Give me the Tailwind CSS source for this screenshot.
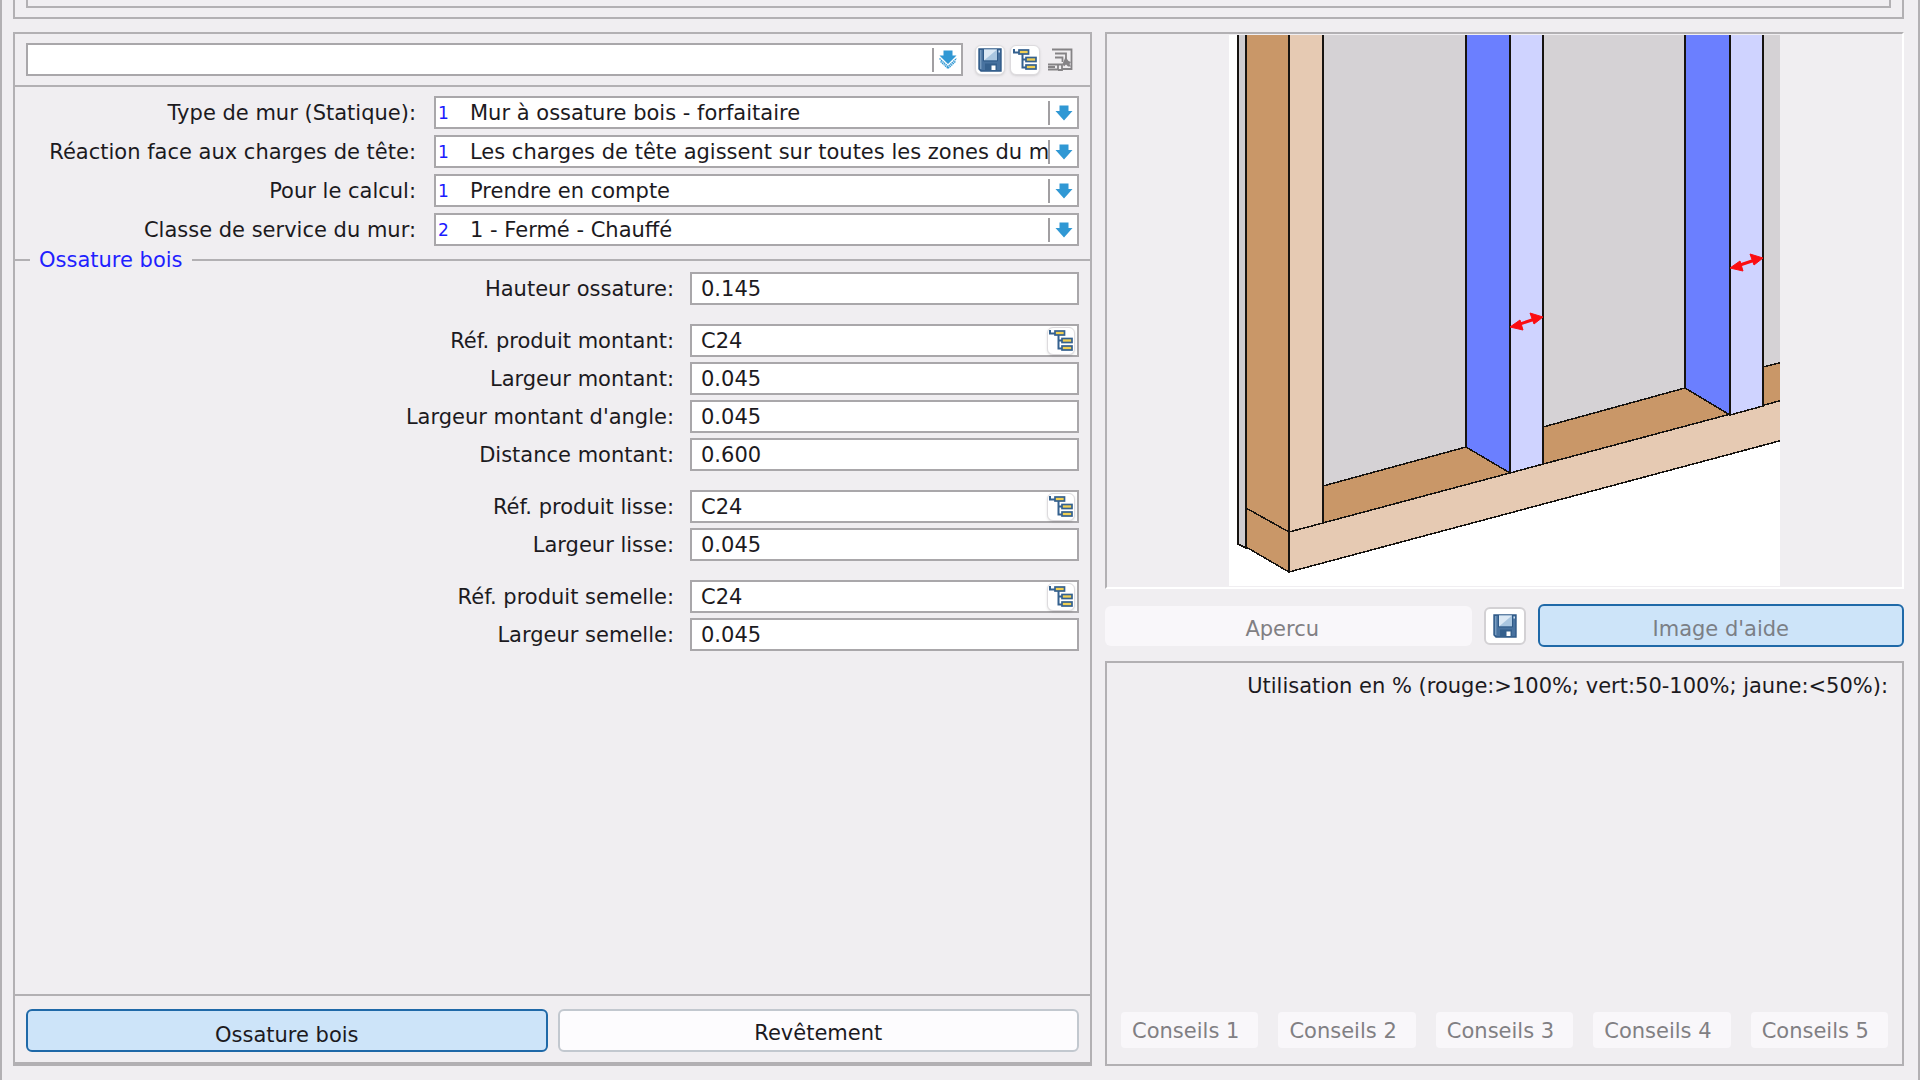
<!DOCTYPE html>
<html lang="fr">
<head>
    <meta charset="UTF-8">
    <meta name="viewport" content="width=device-width, initial-scale=1.0">
    <title>Mur à ossature bois</title>
    <script src="https://cdn.jsdelivr.net/npm/@tailwindcss/browser@4"></script>
    <style>
        body {
            font-family: 'DejaVu Sans', Verdana, sans-serif;
        }
    </style>
</head>
<body class="bg-[#f0eef1] text-[21px] leading-6 text-[#1c1a1e]">

    <!-- Shared icons -->
    <svg class="hidden">
        <symbol id="icon-arrow" viewBox="0 0 18 16">
            <path d="M4.500 0.500h9v5.500h4l-8.500 9.500L0.500 6h4z" fill="#3098d4"/>
        </symbol>
        <symbol id="icon-arrow-multi" viewBox="0 0 18 20">
            <path d="M4.500 0.500h9v5h4l-8.500 8.500L0.500 5.500h4z" fill="#3098d4"/>
            <path d="M0.500 8.500l8.500 8 8.500-8M1.500 11.500l7.500 7 7.500-7" fill="none" stroke="#3098d4" stroke-width="1.300" stroke-dasharray="1.500 0.600"/>
        </symbol>
        <symbol id="icon-save" viewBox="0 0 24 24">
            <path d="M1 1h22v22H3l-2-2z" fill="#48729f" stroke="#2f5a88" stroke-width="1.400"/>
            <path d="M2.800 2v19" stroke="#8fb0d0" stroke-width="1"/>
            <rect x="6" y="1.500" width="13" height="11" fill="#a9c6e0"/>
            <path d="M6 12.500V1.500h13z" fill="#dce9f5"/>
            <path d="M5.500 1v12h14V1" fill="none" stroke="#2f5a88" stroke-width="1"/>
            <rect x="7" y="15.500" width="12" height="7.500" fill="#35608d"/>
            <rect x="13.500" y="17.500" width="4" height="4.500" fill="#fff"/>
            <rect x="20.500" y="2.500" width="1.500" height="2" fill="#cfe0f0"/>
        </symbol>
        <symbol id="icon-tree" viewBox="0 0 24 24">
            <path d="M1 1v3.500h5M9.500 6v13.500h4M9.500 11.500h4" fill="none" stroke="#34618f" stroke-width="2"/>
            <g fill="#f2cf52" stroke="#34618f" stroke-width="1.700">
                <rect x="6" y="2" width="9.500" height="4"/>
                <rect x="13" y="9.500" width="10" height="4"/>
                <rect x="13" y="17" width="10" height="4"/>
            </g>
        </symbol>
        <symbol id="icon-transfer" viewBox="0 0 26 24">
            <g fill="none" stroke="#858386" stroke-width="1.800">
                <path d="M5 1.500h19.500v19.500H15M8 5.500h11v6M8 9.500h7.500v4.500"/>
                <path d="M1 16.500h10v5H1M1 19h7M11 16.500h4v5.500h-4"/>
            </g>
            <path d="M18.500 9l3 4 2.500 1-1.500 2 1.500 2.500h-3l-2-2-2 2-1.500-2.500z" fill="#858386"/>
        </symbol>
    </svg>

    <div class="flex min-h-screen flex-col border-x-2 border-[#b2b0b3] pr-[14px] pb-[14px] pl-[11px]">

        <!-- Bottom edge of the upper frame -->
        <div class="border-x-2 border-b-2 border-[#b2b0b3] px-[11px] pb-[9px]">
            <div class="h-2 border-x-2 border-b-2 border-[#b2b0b3]"></div>
        </div>

        <main class="mt-[13px] grid flex-1 grid-cols-[1079fr_799fr] gap-[13px]">

            <!-- Parameters -->
            <form class="flex min-w-0 flex-col border-2 border-b-4 border-[#b2b0b3]">
                <div class="flex items-center border-b-2 border-[#b2b0b3] px-[11px] pt-[9px] pb-[9px]">
                    <div class="flex h-[33px] flex-1 items-center border-2 border-[#a9a7aa] bg-white pr-1">
                        <select aria-label="Modèle" class="h-full min-w-0 flex-1 appearance-none bg-transparent px-2 outline-none"><option></option></select>
                        <span class="mr-[5px] h-6 w-[2px] bg-[#a19fa2]"></span>
                        <svg class="h-5 w-[18px]"><use href="#icon-arrow-multi"/></svg>
                    </div>
                    <div class="mr-1 ml-3 flex items-center gap-[5px]">
                        <button type="button" aria-label="Enregistrer" class="flex size-[30px] items-center justify-center rounded-md border border-[#dddbde] bg-white shadow-sm"><svg class="size-6"><use href="#icon-save"/></svg></button>
                        <button type="button" aria-label="Arborescence" class="flex size-[30px] items-center justify-center rounded-md border border-[#dddbde] bg-white shadow-sm"><svg class="size-6"><use href="#icon-tree"/></svg></button>
                        <button type="button" aria-label="Reprendre" class="flex size-[30px] items-center justify-center"><svg class="h-6 w-[26px]"><use href="#icon-transfer"/></svg></button>
                    </div>
                </div>

                <div class="flex flex-col gap-[6px] px-[11px] pt-[9px]">
                    <div class="flex items-center">
                        <label for="type" class="w-[390px] shrink-0 text-right">Type de mur (Statique):</label>
                        <div class="ml-[18px] flex h-[33px] min-w-0 flex-1 items-center border-2 border-[#a9a7aa] bg-white pr-1">
                            <span class="w-[34px] shrink-0 pl-[2px] text-[17px] text-[#1a1aff]">1</span>
                            <select id="type" class="h-full min-w-0 flex-1 appearance-none bg-transparent outline-none"><option>Mur à ossature bois - forfaitaire</option></select>
                            <span class="mr-[5px] h-6 w-[2px] shrink-0 bg-[#a19fa2]"></span>
                            <svg class="h-4 w-[18px] shrink-0"><use href="#icon-arrow"/></svg>
                        </div>
                    </div>
                    <div class="flex items-center">
                        <label for="reaction" class="w-[390px] shrink-0 text-right">Réaction face aux charges de tête:</label>
                        <div class="ml-[18px] flex h-[33px] min-w-0 flex-1 items-center border-2 border-[#a9a7aa] bg-white pr-1">
                            <span class="w-[34px] shrink-0 pl-[2px] text-[17px] text-[#1a1aff]">1</span>
                            <select id="reaction" class="h-full min-w-0 flex-1 appearance-none bg-transparent outline-none"><option>Les charges de tête agissent sur toutes les zones du m</option></select>
                            <span class="mr-[5px] h-6 w-[2px] shrink-0 bg-[#a19fa2]"></span>
                            <svg class="h-4 w-[18px] shrink-0"><use href="#icon-arrow"/></svg>
                        </div>
                    </div>
                    <div class="flex items-center">
                        <label for="calcul" class="w-[390px] shrink-0 text-right">Pour le calcul:</label>
                        <div class="ml-[18px] flex h-[33px] min-w-0 flex-1 items-center border-2 border-[#a9a7aa] bg-white pr-1">
                            <span class="w-[34px] shrink-0 pl-[2px] text-[17px] text-[#1a1aff]">1</span>
                            <select id="calcul" class="h-full min-w-0 flex-1 appearance-none bg-transparent outline-none"><option>Prendre en compte</option></select>
                            <span class="mr-[5px] h-6 w-[2px] shrink-0 bg-[#a19fa2]"></span>
                            <svg class="h-4 w-[18px] shrink-0"><use href="#icon-arrow"/></svg>
                        </div>
                    </div>
                    <div class="flex items-center">
                        <label for="classe" class="w-[390px] shrink-0 text-right">Classe de service du mur:</label>
                        <div class="ml-[18px] flex h-[33px] min-w-0 flex-1 items-center border-2 border-[#a9a7aa] bg-white pr-1">
                            <span class="w-[34px] shrink-0 pl-[2px] text-[17px] text-[#1a1aff]">2</span>
                            <select id="classe" class="h-full min-w-0 flex-1 appearance-none bg-transparent outline-none"><option>1 - Fermé - Chauffé</option></select>
                            <span class="mr-[5px] h-6 w-[2px] shrink-0 bg-[#a19fa2]"></span>
                            <svg class="h-4 w-[18px] shrink-0"><use href="#icon-arrow"/></svg>
                        </div>
                    </div>
                </div>

                <!-- Group title -->
                <div class="mt-[2px] flex items-center">
                    <span class="h-[2px] w-[15px] bg-[#b2b0b3]"></span>
                    <h2 class="mx-[9px] text-[#1f1fff]">Ossature bois</h2>
                    <span class="h-[2px] flex-1 bg-[#b2b0b3]"></span>
                </div>

                <div class="flex flex-col gap-[19px] px-[11px]">
                    <div class="flex items-center">
                        <label for="hauteur" class="flex-1 text-right">Hauteur ossature:</label>
                        <input id="hauteur" value="0.145" class="ml-4 h-[33px] w-[389px] border-2 border-[#a9a7aa] bg-white px-[9px] outline-none">
                    </div>

                    <div class="flex flex-col gap-[5px]">
                        <div class="flex items-center">
                            <label for="ref-montant" class="flex-1 text-right">Réf. produit montant:</label>
                            <div class="ml-4 flex h-[33px] w-[389px] items-center border-2 border-[#a9a7aa] bg-white pr-[2px]">
                                <input id="ref-montant" value="C24" class="min-w-0 flex-1 bg-transparent px-[9px] outline-none">
                                <button type="button" aria-label="Choisir le produit montant" class="flex size-7 items-center justify-center rounded-md border border-[#dddbde] bg-white shadow-sm"><svg class="size-6"><use href="#icon-tree"/></svg></button>
                            </div>
                        </div>
                        <div class="flex items-center">
                            <label for="larg-montant" class="flex-1 text-right">Largeur montant:</label>
                            <input id="larg-montant" value="0.045" class="ml-4 h-[33px] w-[389px] border-2 border-[#a9a7aa] bg-white px-[9px] outline-none">
                        </div>
                        <div class="flex items-center">
                            <label for="larg-angle" class="flex-1 text-right">Largeur montant d'angle:</label>
                            <input id="larg-angle" value="0.045" class="ml-4 h-[33px] w-[389px] border-2 border-[#a9a7aa] bg-white px-[9px] outline-none">
                        </div>
                        <div class="flex items-center">
                            <label for="dist-montant" class="flex-1 text-right">Distance montant:</label>
                            <input id="dist-montant" value="0.600" class="ml-4 h-[33px] w-[389px] border-2 border-[#a9a7aa] bg-white px-[9px] outline-none">
                        </div>
                    </div>

                    <div class="flex flex-col gap-[5px]">
                        <div class="flex items-center">
                            <label for="ref-lisse" class="flex-1 text-right">Réf. produit lisse:</label>
                            <div class="ml-4 flex h-[33px] w-[389px] items-center border-2 border-[#a9a7aa] bg-white pr-[2px]">
                                <input id="ref-lisse" value="C24" class="min-w-0 flex-1 bg-transparent px-[9px] outline-none">
                                <button type="button" aria-label="Choisir le produit lisse" class="flex size-7 items-center justify-center rounded-md border border-[#dddbde] bg-white shadow-sm"><svg class="size-6"><use href="#icon-tree"/></svg></button>
                            </div>
                        </div>
                        <div class="flex items-center">
                            <label for="larg-lisse" class="flex-1 text-right">Largeur lisse:</label>
                            <input id="larg-lisse" value="0.045" class="ml-4 h-[33px] w-[389px] border-2 border-[#a9a7aa] bg-white px-[9px] outline-none">
                        </div>
                    </div>

                    <div class="flex flex-col gap-[5px]">
                        <div class="flex items-center">
                            <label for="ref-semelle" class="flex-1 text-right">Réf. produit semelle:</label>
                            <div class="ml-4 flex h-[33px] w-[389px] items-center border-2 border-[#a9a7aa] bg-white pr-[2px]">
                                <input id="ref-semelle" value="C24" class="min-w-0 flex-1 bg-transparent px-[9px] outline-none">
                                <button type="button" aria-label="Choisir le produit semelle" class="flex size-7 items-center justify-center rounded-md border border-[#dddbde] bg-white shadow-sm"><svg class="size-6"><use href="#icon-tree"/></svg></button>
                            </div>
                        </div>
                        <div class="flex items-center">
                            <label for="larg-semelle" class="flex-1 text-right">Largeur semelle:</label>
                            <input id="larg-semelle" value="0.045" class="ml-4 h-[33px] w-[389px] border-2 border-[#a9a7aa] bg-white px-[9px] outline-none">
                        </div>
                    </div>
                </div>

                <!-- Page tabs, the active one has its text pressed down -->
                <div class="mt-auto grid grid-cols-2 gap-[10px] border-t-2 border-[#b2b0b3] px-[11px] pt-[13px] pb-[10px]">
                    <button type="button" class="h-[43px] rounded-md border-2 border-[#1f69a8] bg-[#cde4f9] pt-2">Ossature bois</button>
                    <button type="button" class="h-[43px] rounded-md border-2 border-[#c2c8cf] bg-[#fdfcfe] pt-1">Revêtement</button>
                </div>
            </form>

            <!-- Help picture and usage -->
            <section class="flex min-w-0 flex-col">
                <div class="flex justify-center border-2 border-t-[#b2b0b3] border-r-white border-b-white border-l-[#b2b0b3] py-px">
                    <svg class="size-[551px]" viewBox="0 0 551 551">
                        <rect width="551" height="551" fill="#fff"/>
                        <g stroke="#161310" stroke-width="1.500" shape-rendering="crispEdges">
                            <path d="M9-2V509l8 4V-2z" fill="#cfcdd0"/>
                            <path d="M94-2V451L237 412V-2z" fill="#d5d2d5"/>
                            <path d="M314-2V392L456 353V-2z" fill="#d5d2d5"/>
                            <path d="M534-2V332l20-5V-2z" fill="#d5d2d5"/>
                            <path d="M94 451L237 412l44 26L94 488z" fill="#c99768"/>
                            <path d="M314 392L456 353l45 27-187 49z" fill="#c99768"/>
                            <path d="M534 332l20-5v38l-20 6z" fill="#c99768"/>
                            <path d="M17-2V473l43 24V-2z" fill="#c99768"/>
                            <path d="M17 473l43 24v40l-43-25z" fill="#c99768"/>
                            <path d="M60 497L554 365v40L60 537z" fill="#e6cab3"/>
                            <path d="M60-2V497l34-9V-2z" fill="#e6cab3"/>
                            <path d="M237-2V412l44 26V-2z" fill="#6b7fff"/>
                            <path d="M281-2V438l33-9V-2z" fill="#cfd3ff"/>
                            <path d="M456-2V353l45 27V-2z" fill="#6b7fff"/>
                            <path d="M501-2V380l33-9V-2z" fill="#cfd3ff"/>
                        </g>
                        <g fill="#fb0d12" stroke="#fb0d12">
                            <path d="M288 290l18-6" stroke-width="3"/>
                            <path d="M281 292l10-7 3 10zM314 282l-13-4 4 11z"/>
                            <path d="M508 231l18-6" stroke-width="3"/>
                            <path d="M501 233l10-7 3 10zM534 223l-13-4 4 11z"/>
                        </g>
                    </svg>
                </div>

                <div class="mt-[15px] grid grid-cols-[1fr_42px_1fr] items-center gap-3">
                    <button type="button" disabled class="h-10 rounded-md bg-[#f9f7fa] pt-[6px] pr-3 text-[#817f83]">Apercu</button>
                    <button type="button" aria-label="Enregistrer l'image" class="flex h-[38px] items-center justify-center rounded-md border-2 border-[#d3d1d4] bg-white"><svg class="size-6"><use href="#icon-save"/></svg></button>
                    <button type="button" disabled class="h-[43px] rounded-md border-2 border-[#1f69a8] bg-[#cde4f9] pt-[6px] text-[#7b7f86]">Image d'aide</button>
                </div>

                <div class="mt-[14px] flex flex-1 flex-col border-2 border-[#b2b0b3] px-[14px] pt-[11px] pb-4">
                    <p class="text-right">Utilisation en % (rouge:&gt;100%; vert:50-100%; jaune:&lt;50%):</p>
                    <div class="mt-auto grid grid-cols-5 gap-5">
                        <button type="button" disabled class="h-9 rounded bg-[#f9f7fa] pt-[2px] pr-2 whitespace-nowrap text-[#817f83]">Conseils 1</button>
                        <button type="button" disabled class="h-9 rounded bg-[#f9f7fa] pt-[2px] pr-2 whitespace-nowrap text-[#817f83]">Conseils 2</button>
                        <button type="button" disabled class="h-9 rounded bg-[#f9f7fa] pt-[2px] pr-2 whitespace-nowrap text-[#817f83]">Conseils 3</button>
                        <button type="button" disabled class="h-9 rounded bg-[#f9f7fa] pt-[2px] pr-2 whitespace-nowrap text-[#817f83]">Conseils 4</button>
                        <button type="button" disabled class="h-9 rounded bg-[#f9f7fa] pt-[2px] pr-2 whitespace-nowrap text-[#817f83]">Conseils 5</button>
                    </div>
                </div>
            </section>
        </main>
    </div>
</body>
</html>
